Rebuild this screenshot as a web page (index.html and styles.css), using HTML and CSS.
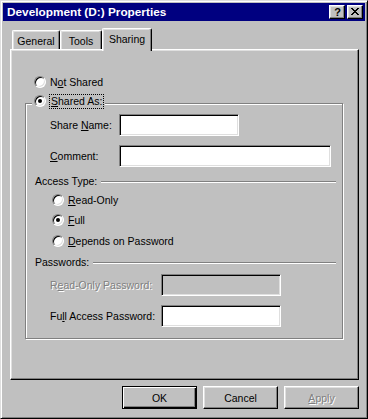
FILE: index.html
```html
<!DOCTYPE html>
<html>
<head>
<meta charset="utf-8">
<link rel="stylesheet" href="styles.css">
</head>
<body>
<div class="window">
  <div class="titlebar">
    <span class="title">Development (D:) Properties</span>
    <span class="capbtns">
      <span class="capbtn help">?</span>
      <span class="capbtn close"><svg width="8" height="7" viewBox="0 0 8 7"><path d="M0 0h2v1h1v1h2v-1h1v-1h2v1h-1v1h-1v1h-1v1h1v1h1v1h1v1h-2v-1h-1v-1h-2v1h-1v1h-2v-1h1v-1h1v-1h1v-1h-1v-1h-1v-1h-1z" fill="#000"/></svg></span>
    </span>
  </div>
  <div class="tabs">
    <div class="tab t-general">General</div>
    <div class="tab t-tools">Tools</div>
    <div class="tab t-sharing sel">Sharing</div>
  </div>
  <div class="panel">
    <div class="radio-row not-shared"><span class="radio"></span><span class="lbl">N<u>o</u>t Shared</span></div>
    <div class="group">
      <div class="legend"><span class="radio checked"></span><span class="lbl focus"><u>S</u>hared As:</span></div>
      <div class="field first"><span class="flabel">Share <u>N</u>ame:</span><span class="input w-name"></span></div>
      <div class="field"><span class="flabel"><u>C</u>omment:</span><span class="input w-comment"></span></div>
      <div class="section access"><span>Access Type:</span><span class="etch"></span></div>
      <div class="radio-row opt r1"><span class="radio"></span><span class="lbl"><u>R</u>ead-Only</span></div>
      <div class="radio-row opt r2"><span class="radio checked"></span><span class="lbl"><u>F</u>ull</span></div>
      <div class="radio-row opt r3"><span class="radio"></span><span class="lbl"><u>D</u>epends on Password</span></div>
      <div class="section pw"><span>Passwords:</span><span class="etch"></span></div>
      <div class="field pwf first"><span class="plabel disabled">R<u>e</u>ad-Only Password:</span><span class="input w-pw dis"></span></div>
      <div class="field pwf"><span class="plabel">Fu<u>l</u>l Access Password:</span><span class="input w-pw"></span></div>
    </div>
  </div>
  <div class="buttons">
    <div class="btn default">OK</div>
    <div class="btn">Cancel</div>
    <div class="btn disabled"><u>A</u>pply</div>
  </div>
</div>
</body>
</html>
```

FILE: styles.css
```css
* { box-sizing: border-box; }
html, body { margin: 0; padding: 0; background: #c0c0c0; }
body {
  font-family: "Liberation Sans", Arial, sans-serif;
  font-size: 10.5px;
  line-height: 14px;
  color: #000;
}
u { text-decoration: underline; text-underline-offset: 1px; }

.window {
  width: 368px;
  height: 419px;
  background: #c0c0c0;
  border: 1px solid;
  border-color: #dfdfdf #000 #000 #dfdfdf;
  box-shadow: inset 1px 1px #fff, inset -1px -1px #808080;
  padding: 2px;
  display: flex;
  flex-direction: column;
}

.titlebar {
  height: 18px;
  background: #000080;
  display: flex;
  align-items: center;
  justify-content: space-between;
  padding-left: 4px;
  padding-right: 2px;
}
.title {
  color: #fff;
  font-weight: bold;
  font-size: 11.8px;
}
.capbtns { display: flex; gap: 2px; }
.capbtn {
  width: 16px;
  height: 14px;
  background: #c0c0c0;
  border: 1px solid;
  border-color: #fff #000 #000 #fff;
  box-shadow: inset -1px -1px #808080, inset 1px 1px #dfdfdf;
  display: flex;
  align-items: center;
  justify-content: center;
}
.help { font-weight: bold; font-size: 11px; line-height: 12px; color: #000; padding-left: 1px; }
.close svg { display: block; margin-top: -1px; }

.tabs {
  margin-top: 7px;
  margin-left: 9px;
  height: 21px;
  display: flex;
  align-items: flex-end;
  z-index: 1;
}
.tab {
  height: 19px;
  border-left: 1px solid #fff;
  border-top: 1px solid #fff;
  border-right: 1px solid #000;
  border-radius: 2px 2px 0 0;
  box-shadow: inset -1px 0 #808080, inset 1px 1px #dfdfdf;
  background: #c0c0c0;
  display: flex;
  justify-content: center;
  padding-top: 3px;
}
.t-general { width: 48px; }
.t-tools { width: 42px; }
.t-sharing { width: 50px; }
.tab.sel {
  height: 23px;
  margin-bottom: -2px;
  padding-top: 3px;
}

.panel {
  margin-left: 7px;
  width: 349px;
  height: 331px;
  border: 1px solid;
  border-color: #fff #000 #000 #fff;
  box-shadow: inset -1px -1px #808080, inset 1px 1px #dfdfdf;
  display: flex;
  flex-direction: column;
  align-items: flex-start;
}

.radio-row { display: flex; align-items: center; height: 14px; }
.radio {
  width: 12px;
  height: 12px;
  border-radius: 50%;
  background: #fff;
  border: 1px solid;
  border-color: #808080 #fff #fff #808080;
  box-shadow: inset 1px 1px #000, inset -1px -1px #dfdfdf;
  display: flex;
  align-items: center;
  justify-content: center;
  flex: none;
}
.radio.checked::after {
  content: "";
  width: 4px;
  height: 4px;
  border-radius: 50%;
  background: #000;
}
.lbl { margin-left: 4px; }
.not-shared { margin-top: 25px; margin-left: 23px; }

.group {
  margin-top: 14px;
  margin-left: 14px;
  width: 318px;
  border: 1px solid #808080;
  box-shadow: inset 1px 1px #fff, 1px 1px #fff;
  padding-bottom: 11px;
  display: flex;
  flex-direction: column;
  align-items: flex-start;
}
.legend {
  margin-top: -10px;
  margin-left: 6px;
  padding: 0 2px;
  background: #c0c0c0;
  display: flex;
  align-items: center;
  height: 14px;
}
.focus {
  outline: 1px dotted #000;
  outline-offset: 0;
  padding: 0 1px;
  line-height: 13px;
}

.field { display: flex; align-items: center; margin-top: 9px; margin-left: 24px; }
.field.first { margin-top: 6px; }
.pwf.first { margin-top: 5px; }
.flabel { width: 69px; }
.plabel { width: 111px; }
.input {
  height: 22px;
  background: #fff;
  border: 1px solid;
  border-color: #808080 #fff #fff #808080;
  box-shadow: inset 1px 1px #000, inset -1px -1px #dfdfdf;
}
.input.dis { background: #c0c0c0; }
.w-name { width: 120px; }
.w-comment { width: 212px; }
.w-pw { width: 120px; }

.section {
  display: flex;
  align-items: center;
  height: 14px;
  margin-left: 9px;
  width: 301px;
}
.access { margin-top: 7px; }
.pw { margin-top: 7px; }
.etch {
  flex: 1;
  height: 2px;
  margin-left: 4px;
  margin-top: 1px;
  border-top: 1px solid #808080;
  border-bottom: 1px solid #fff;
}
.opt { margin-left: 26px; }
.r1 { margin-top: 5px; }
.r2 { margin-top: 6px; }
.r3 { margin-top: 7px; }

.disabled { color: #808080; text-shadow: 1px 1px #fff; }

.buttons {
  margin-top: 6px;
  display: flex;
  justify-content: flex-end;
  gap: 6px;
  padding-right: 6px;
}
.btn {
  width: 75px;
  height: 23px;
  border: 1px solid;
  border-color: #fff #000 #000 #fff;
  box-shadow: inset -1px -1px #808080, inset 1px 1px #dfdfdf;
  display: flex;
  align-items: center;
  justify-content: center;
}
.btn.default {
  border-color: #000;
  box-shadow: inset 1px 1px #fff, inset -1px -1px #000, inset -2px -2px #808080;
}
```
